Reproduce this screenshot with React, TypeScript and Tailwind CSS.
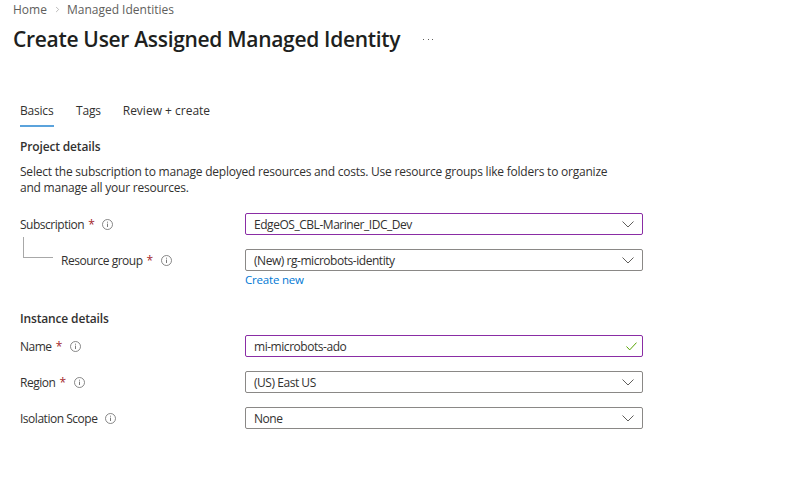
import { ChevronRight } from 'lucide-react'

function InfoIcon() {
  return (
    <svg width="11" height="11" viewBox="0 0 11 11" fill="none" className="shrink-0">
      <circle cx="5.5" cy="5.5" r="5" stroke="#6b6b6b" strokeWidth="0.8" />
      <path d="M5.5 4.6v3.4" stroke="#6b6b6b" strokeWidth="0.9" />
      <path d="M5.5 2.7v1" stroke="#6b6b6b" strokeWidth="0.9" />
    </svg>
  )
}

function FieldLabel({ text, required }: { text: string; required?: boolean }) {
  return (
    <div className="flex items-center pt-[1px] text-[12px] tracking-[-0.48px] text-[#323130]">
      <span>{text}</span>
      {required && <span className="ml-[4px] text-[#a4262c]">*</span>}
      <span className="ml-[8px] flex">
        <InfoIcon />
      </span>
    </div>
  )
}

function Field({ value, active, valid }: { value: string; active?: boolean; valid?: boolean }) {
  return (
    <div
      className={`flex h-[22px] w-[398px] items-center justify-between rounded-[2px] border pl-[8px] text-[12px] tracking-[-0.46px] text-[#323130] ${
        active ? 'border-[#8a2da5]' : 'border-[#8a8886]'
      } ${valid ? 'pr-[5px]' : 'pr-[8px]'}`}
    >
      <span className="pt-[1px]">{value}</span>
      {valid ? (
        <svg width="11" height="9" viewBox="0 0 11 9" fill="none">
          <path d="M0.5 4.5l3.2 3.4L10.5 0.6" stroke="#57a300" strokeWidth="1" />
        </svg>
      ) : (
        <svg width="12" height="7" viewBox="0 0 12 7" fill="none">
          <path d="M0.5 0.5l5.5 5.5 5.5-5.5" stroke="#605e5c" strokeWidth="1" />
        </svg>
      )}
    </div>
  )
}

export default function App() {
  return (
    <div className="h-[481px] w-[806px] overflow-hidden bg-white font-['Open_Sans','Noto_Sans',sans-serif] text-[#323130]">
      <div className="flex h-[18px] items-center pl-[13px] pt-[1px] text-[12px] text-[#605e5c]">
        <span>Home</span>
        <ChevronRight size={9} strokeWidth={1.5} className="ml-[6px] mr-[5px] text-[#8a8886]" />
        <span>Managed Identities</span>
      </div>

      <div className="mt-[7px] flex h-[28px] items-center pl-[13px]">
        <h1 className="text-[21px] font-semibold leading-[28px] tracking-[-0.31px] text-[#201f1e]">
          Create User Assigned Managed Identity
        </h1>
        <span className="ml-[23px] flex gap-[3.5px]">
          <span className="h-[1px] w-[1px] bg-[#605e5c]" />
          <span className="h-[1px] w-[1px] bg-[#605e5c]" />
          <span className="h-[1px] w-[1px] bg-[#605e5c]" />
        </span>
      </div>

      <div className="pl-[20px] pt-[50px]">
        <div className="flex h-[24px] items-start text-[12px] leading-[16px] text-[#323130]">
          <div className="h-[24px] w-[34px] border-b-2 border-[#5ba3dc] font-medium tracking-[-0.2px]">Basics</div>
          <div className="ml-[22px] tracking-[-0.2px]">Tags</div>
          <div className="ml-[22px]">Review + create</div>
        </div>

        <h2 className="mt-[12px] text-[12px] font-semibold leading-[16px] tracking-[-0.15px] text-[#323130]">
          Project details
        </h2>
        <p className="mt-[9px] w-[600px] text-[12px] leading-[16px] tracking-[-0.22px] text-[#323130]">
          Select the subscription to manage deployed resources and costs. Use resource groups like folders to organize and manage all your resources.
        </p>

        <div className="relative mt-[17px] flex items-center">
          <div className="w-[225px]">
            <FieldLabel text="Subscription" required />
          </div>
          <Field value="EdgeOS_CBL-Mariner_IDC_Dev" active />
          <div className="absolute left-[3px] top-[24px] h-[21px] w-[30px] border-b border-l border-[#a8a8a8]" />
        </div>

        <div className="mt-[14px] flex items-center">
          <div className="w-[225px] pl-[41px]">
            <FieldLabel text="Resource group" required />
          </div>
          <Field value="(New) rg-microbots-identity" />
        </div>
        <a className="ml-[225px] block text-[11.5px] leading-[18px] tracking-[-0.2px] text-[#0078d4]">Create new</a>

        <h2 className="mt-[22px] text-[12px] font-semibold leading-[16px] tracking-[-0.15px] text-[#323130]">
          Instance details
        </h2>

        <div className="mt-[8px] flex items-center">
          <div className="w-[225px]">
            <FieldLabel text="Name" required />
          </div>
          <Field value="mi-microbots-ado" active valid />
        </div>
        <div className="mt-[14px] flex items-center">
          <div className="w-[225px]">
            <FieldLabel text="Region" required />
          </div>
          <Field value="(US) East US" />
        </div>
        <div className="mt-[14px] flex items-center">
          <div className="w-[225px]">
            <FieldLabel text="Isolation Scope" />
          </div>
          <Field value="None" />
        </div>
      </div>
    </div>
  )
}
